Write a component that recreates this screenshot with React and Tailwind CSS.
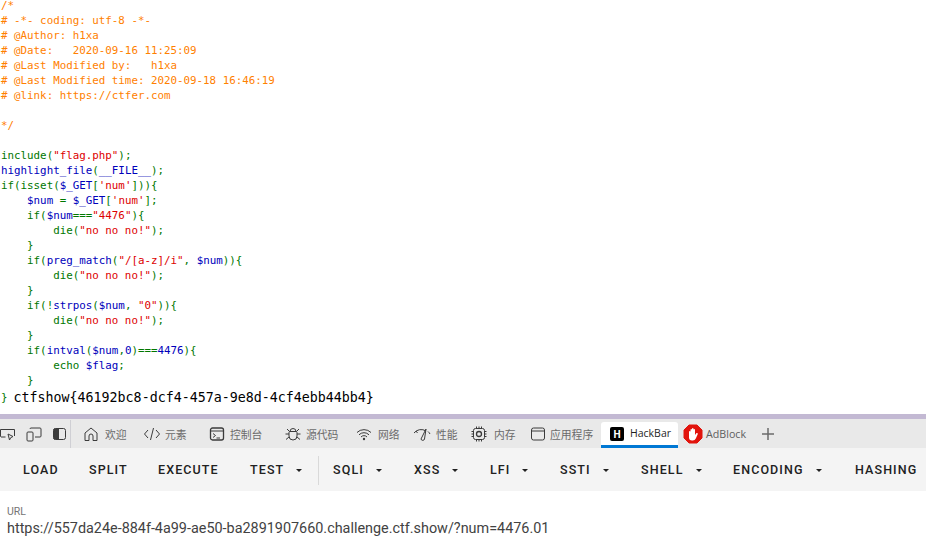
const O = "text-[#ff8000]", G = "text-[#007700]", B = "text-[#0000bb]", R = "text-[#dd0000]";
const code = [
  [[O, "/*"]], [[O, "# -*- coding: utf-8 -*-"]], [[O, "# @Author: h1xa"]], [[O, "# @Date:   2020-09-16 11:25:09"]],
  [[O, "# @Last Modified by:   h1xa"]], [[O, "# @Last Modified time: 2020-09-18 16:46:19"]], [[O, "# @link: https://ctfer.com"]],
  [], [[O, "*/"]], [],
  [[G, "include("], [R, '"flag.php"'], [G, ");"]],
  [[B, "highlight_file"], [G, "("], [B, "__FILE__"], [G, ");"]],
  [[G, "if(isset("], [B, "$_GET"], [G, "["], [R, "'num'"], [G, "])){"]],
  [[B, "    $num "], [G, "= "], [B, "$_GET"], [G, "["], [R, "'num'"], [G, "];"]],
  [[G, "    if("], [B, "$num"], [G, "==="], [R, '"4476"'], [G, "){"]],
  [[G, "        die("], [R, '"no no no!"'], [G, ");"]],
  [[G, "    }"]],
  [[G, "    if("], [B, "preg_match"], [G, "("], [R, '"/[a-z]/i"'], [G, ", "], [B, "$num"], [G, ")){"]],
  [[G, "        die("], [R, '"no no no!"'], [G, ");"]],
  [[G, "    }"]],
  [[G, "    if(!"], [B, "strpos"], [G, "("], [B, "$num"], [G, ", "], [R, '"0"'], [G, ")){"]],
  [[G, "        die("], [R, '"no no no!"'], [G, ");"]],
  [[G, "    }"]],
  [[G, "    if("], [B, "intval"], [G, "("], [B, "$num"], [G, ","], [B, "0"], [G, ")==="], [B, "4476"], [G, "){"]],
  [[G, "        echo "], [B, "$flag"], [G, ";"]],
  [[G, "    }"]],
];

const I = ({ children, w = 16, vb = "0 0 16 16" }) => (
  <svg width={w} height="16" viewBox={vb} fill="none" stroke="#3b3b3b" strokeWidth="1" className="shrink-0">{children}</svg>
);

const devTabs = [
  ["欢迎", <I key="a" w={16}><path d="M2 14.500V7l6-5 6 5v7.500h-4V10a2 2 0 0 0-4 0v4.500z" /></I>, "w-[72px] pl-[12px] gap-[6px]"],
  ["元素", <I key="b" w={18} vb="0 0 18 16"><path d="M5 4 1.500 8 5 12M13 4l3.500 4-3.500 4M10.500 2l-3 12" /></I>, "w-[66px] gap-[4px]"],
  ["控制台", <I key="c"><rect x="1.500" y="2" width="13" height="12" rx="2" strokeWidth="1.300" /><path d="M1.500 5h13M4 7.500 6.500 9.500 4 11.500M7.500 12H11" /></I>, "w-[75px] gap-[5px]"],
  ["源代码", <I key="d" w={18} vb="0 0 18 16"><path d="M6 5.500h6a1 1 0 0 1 1 1V10a4 4 0 0 1-8 0V6.500a1 1 0 0 1 1-1zM6 5.500a3 3 0 0 1 6 0M5 8H1.500M13 8h3.500M5 11l-3 2.500M13 11l3 2.500M5.500 5.500 3 3M12.500 5.500 15 3" /></I>, "w-[72px] gap-[4px]"],
  ["网络", <I key="e"><path d="M1 6.500a10 10 0 0 1 14 0M3 8.800a7 7 0 0 1 10 0M5 11a4 4 0 0 1 6 0" /><circle cx="8" cy="13" r="1.200" fill="#3b3b3b" stroke="none" /></I>, "w-[57px] gap-[6px]"],
  ["性能", <I key="f" w={18} vb="0 0 18 16"><path d="M1 7a9 9 0 0 1 12-2M17 8a8 8 0 0 0-2-2.500M8 13l5-10-1.500 10a1.800 1.800 0 0 1-3.500 0zM3 5l1.500 2" /></I>, "w-[58px] gap-[5px]"],
  ["内存", <I key="g"><rect x="2.500" y="2.500" width="11" height="11" rx="2" /><circle cx="8" cy="8" r="2.500" strokeWidth="1.300" /><path d="M5.500 0.500v2M8 0.500v2M10.500 0.500v2M5.500 13.500v2M8 13.500v2M10.500 13.500v2M0.500 5.500h2M0.500 8h2M0.500 10.500h2M13.500 5.500h2M13.500 8h2M13.500 10.500h2" /></I>, "w-[59px] gap-[7px]"],
  ["应用程序", <I key="h"><rect x="1.500" y="2" width="13" height="12" rx="2" /><path d="M1.500 5h13" /></I>, "w-[71px] gap-[4px]"],
];

const buttons = [
  ["LOAD", 0, "w-[66px]"], ["SPLIT", 0, "w-[69px]"], ["EXECUTE", 0, "w-[92px]"], ["TEST", 1, "w-[68px]"],
  ["|", 0, ""],
  ["SQLI", 1, "w-[81px]"], ["XSS", 1, "w-[76px]"], ["LFI", 1, "w-[70px]"], ["SSTI", 1, "w-[81px]"], ["SHELL", 1, "w-[92px]"], ["ENCODING", 1, "w-[122px]"], ["HASHING", 0, "w-[71px]"],
];

export default function App() {
  return (
    <div className="w-[926px] h-[543px] overflow-hidden bg-white flex flex-col font-['Roboto',sans-serif]">
      <div className="h-[414px] shrink-0 overflow-hidden">
        <pre className="-mt-[2px] pl-px font-['DejaVu_Sans_Mono',monospace] text-[10.83px] leading-[15px] whitespace-pre">
          {code.map((line, i) => (
            <div key={i} className="h-[15px]">
              {line.map(([c, t], j) => <span key={j} className={c}>{t}</span>)}
            </div>
          ))}
          <div className="flex items-center h-[18px]">
            <span className="text-[#007700]">}</span>
            <span className="ml-[6px] text-[13.3px] text-black">ctfshow{"{46192bc8-dcf4-457a-9e8d-4cf4ebb44bb4}"}</span>
          </div>
        </pre>
      </div>
      <div className="h-[5px] shrink-0 bg-[#c3b9d3]" />
      <div className="h-[29px] shrink-0 pt-px bg-[#e9e9e9] flex items-center font-['Noto_Sans_CJK_SC',sans-serif] text-[10.8px] text-[#6b6b6b]">
        <div className="w-[71px] shrink-0 h-full flex items-center gap-[10px] border-r border-[#cfcfd4]">
          <I><path d="M14.500 10V3.500h-14V10a1 1 0 0 0 .5 1h4.500M8 8l1.500 6 1.200-2.300 2.300-1.200z" /></I>
          <I><rect x="1" y="6" width="6" height="9" rx="1" /><path d="M4 3a1 1 0 0 1 1-1h9a1 1 0 0 1 1 1v7a1 1 0 0 1-1 1H9" /></I>
          <I><rect x="1.500" y="2.500" width="12" height="11" rx="2" /><path d="M2 3h4.500v10H2z" fill="#3b3b3b" /></I>
        </div>
        <div className="flex items-center">
          {devTabs.map(([label, icon, cls]) => (
            <div key={label} className={`${cls} shrink-0 flex items-center`}>
              {icon}
              <span className="whitespace-nowrap">{label}</span>
            </div>
          ))}
        </div>
        <div className="w-[77px] h-[26px] self-end shrink-0 bg-white rounded-t-[3px] border-b-[3px] border-[#0078d4] flex items-center gap-[6px] pl-[9px] font-['Open_Sans',sans-serif] text-[10.5px] text-[#1f1f1f]">
          <span className="w-[14px] h-[14px] bg-black rounded-[2px] text-white text-[10px] font-bold flex items-center justify-center leading-none">H</span>
          HackBar
        </div>
        <div className="flex items-center gap-[3px] pl-[5px] font-['Open_Sans',sans-serif] text-[10.7px] text-[#5f5f5f]">
          <svg width="20" height="20" viewBox="0 0 20 20" className="shrink-0">
            <path d="M6 1h8l5 5v8l-5 5H6l-5-5V6z" fill="#e2140d" stroke="#e2140d" strokeLinejoin="round" />
            <path d="M6 12V7.500a1 1 0 0 1 1.500 0V10V5.500a1 1 0 0 1 1.500 0V10V4.500a1 1 0 0 1 1.500 0V10V5.500a1 1 0 0 1 1.500 0V11l1.500-2a1 1 0 0 1 1.300 1l-2 4.500a3.500 3.500 0 0 1-3 2H9a3 3 0 0 1-3-3z" fill="#fff" />
          </svg>
          AdBlock
        </div>
        <svg width="14" height="14" viewBox="0 0 14 14" stroke="#6b6b6b" strokeWidth="1.500" className="ml-[15px] shrink-0"><path d="M7 1v12M1 7h12" /></svg>
      </div>
      <div className="h-[43px] shrink-0 pt-[2px] bg-[#f4f4f4] flex items-center pl-[23px] overflow-hidden text-[12.5px] font-medium tracking-[1.1px] text-[#212121]">
        {buttons.map(([label, caret, w]) =>
          label === "|" ? (
            <div key="sep" className="w-px h-[29px] mr-[14px] shrink-0 bg-[#d9d9d9]" />
          ) : (
            <div key={label} className={`${w} shrink-0 flex items-center gap-[12px]`}>
              <span>{label}</span>
              {caret ? <span className="w-0 h-0 border-x-[3.500px] border-x-transparent border-t-[3.500px] border-t-[#212121]" /> : null}
            </div>
          )
        )}
      </div>
      <div className="flex-1 bg-white pl-[7px] pt-[15px]">
        <div className="text-[10.5px] leading-[12px] mb-[2px] text-[#757575]">URL</div>
        <div className="text-[14.4px] leading-[18px] text-[#424242] whitespace-nowrap">https://557da24e-884f-4a99-ae50-ba2891907660.challenge.ctf.show/?num=4476.01</div>
      </div>
    </div>
  );
}
